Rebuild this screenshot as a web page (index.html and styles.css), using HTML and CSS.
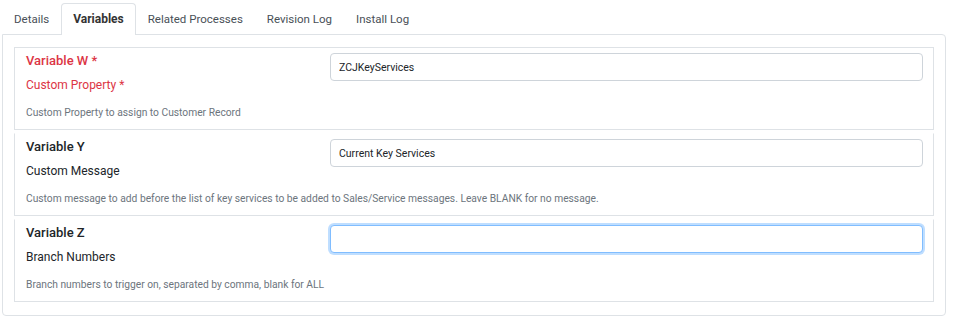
FILE: index.html
```html
<!DOCTYPE html>
<html lang="en">
<head>
    <meta charset="UTF-8">
    <meta name="viewport" content="width=device-width, initial-scale=1.0">
    <title>Process Variables</title>
    <link rel="stylesheet" href="styles.css">
</head>
<body>
    <ul class="nav-tabs">
        <li class="tab">Details</li>
        <li class="tab active">Variables</li>
        <li class="tab">Related Processes</li>
        <li class="tab">Revision Log</li>
        <li class="tab">Install Log</li>
    </ul>

    <div class="tab-content">
        <div class="variable-card">
            <div class="variable-info">
                <div class="variable-name required">Variable W *</div>
                <div class="variable-label required">Custom Property *</div>
            </div>
            <input class="form-input" type="text" value="ZCJKeyServices">
            <div class="variable-help">Custom Property to assign to Customer Record</div>
        </div>

        <div class="variable-card">
            <div class="variable-info">
                <div class="variable-name">Variable Y</div>
                <div class="variable-label">Custom Message</div>
            </div>
            <input class="form-input" type="text" value="Current Key Services">
            <div class="variable-help">Custom message to add before the list of key services to be added to Sales/Service messages. Leave BLANK for no message.</div>
        </div>

        <div class="variable-card">
            <div class="variable-info">
                <div class="variable-name">Variable Z</div>
                <div class="variable-label">Branch Numbers</div>
            </div>
            <input class="form-input focused" type="text" value="" autofocus>
            <div class="variable-help">Branch numbers to trigger on, separated by comma, blank for ALL</div>
        </div>
    </div>
</body>
</html>
```

FILE: styles.css
```css
body {
    font-family: Roboto, "Noto Sans", sans-serif;
    margin: 0;
    padding: 3px 16px 0 2px;
    color: #212529;
    background-color: #fff;
}
.nav-tabs {
    display: flex;
    list-style: none;
    margin: 0;
    padding: 0;
}
.tab {
    padding: 0 11px;
    height: 30px;
    line-height: 30px;
    font-size: 11.5px;
    color: #495057;
    border: 1px solid transparent;
    border-bottom: none;
    border-radius: 4px 4px 0 0;
}
.tab.active {
    font-size: 12px;
    font-weight: bold;
    color: #333;
    background-color: #fff;
    border-color: #dee2e6;
    margin-bottom: -1px;
    height: 31px;
    position: relative;
}
.tab-content {
    border: 1px solid #dee2e6;
    border-radius: 0 4px 4px 4px;
    padding: 12px 11px 13px 11px;
}
.variable-card {
    display: grid;
    grid-template-columns: 304px 1fr;
    border: 1px solid #dee2e6;
    padding: 3px 10px 8px 11px;
}
.variable-card + .variable-card {
    margin-top: 3px;
    border-top-color: transparent;
}
.variable-name {
    font-size: 13px;
    font-weight: 500;
    line-height: 20px;
}
.variable-label {
    font-size: 12px;
    line-height: 20px;
    margin-top: 4px;
}
.required {
    color: #dc3545;
}
.form-input {
    height: 26px;
    margin-top: 2px;
    padding: 0 8px;
    border: 1px solid #ced4da;
    border-radius: 4px;
    font-family: inherit;
    font-size: 10.5px;
    color: #212529;
    outline: none;
    caret-color: #000;
}
.form-input.focused {
    border-color: #80bdff;
    box-shadow: 0 0 0 2px rgba(0, 123, 255, 0.25);
}
.variable-help {
    grid-column: 1 / -1;
    margin-top: 10px;
    font-size: 10.25px;
    line-height: 16px;
    color: #6c757d;
}
```
